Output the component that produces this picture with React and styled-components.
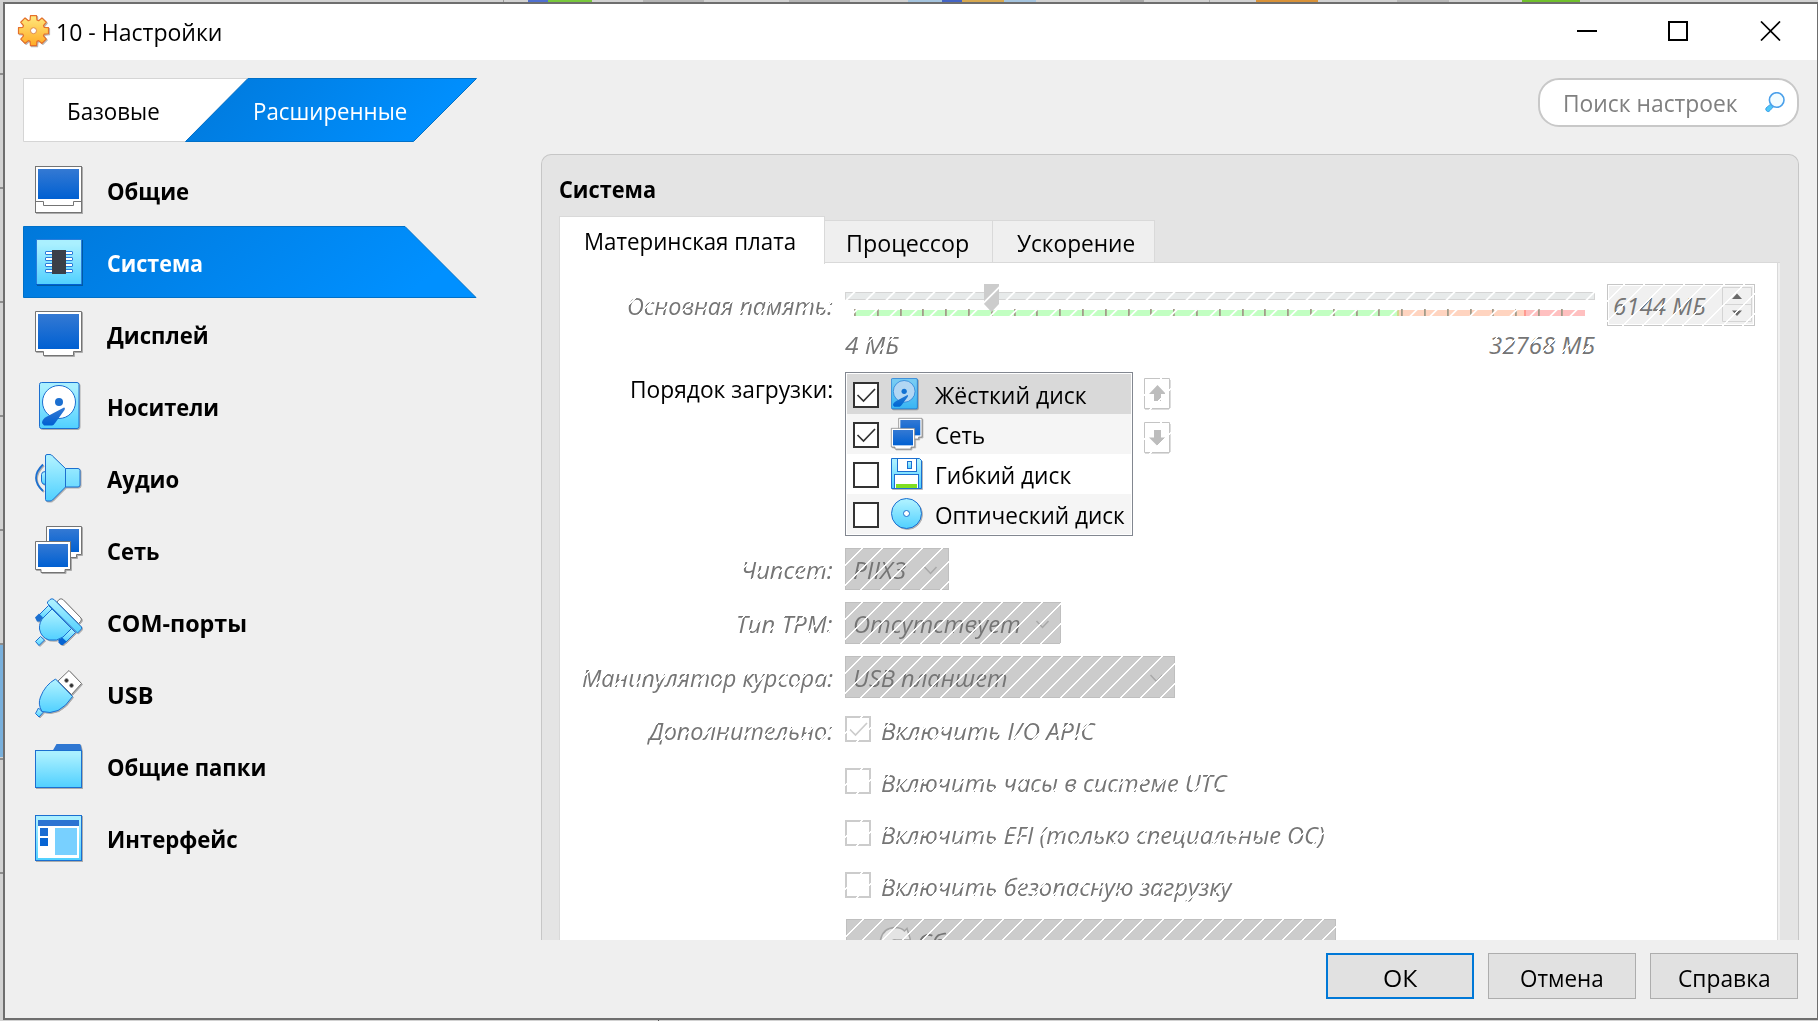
import React, { useLayoutEffect, useRef, useState } from "react";
import styled, { createGlobalStyle, css } from "styled-components";

const Global = createGlobalStyle`
  * { box-sizing: border-box; }
  html, body { margin: 0; width: 100%; height: 100%; overflow: hidden; }
  body { font-family: "Open Sans", "Noto Sans", sans-serif; font-size: 24px; color: #000; }
  button { font: inherit; color: inherit; padding: 0; margin: 0; }
`;

const hatch = css`
  position: relative;
  &::after {
    content: "";
    position: absolute;
    inset: ${(p) => (p.$edge ? -p.$edge : 0)}px;
    pointer-events: none;
    background: repeating-linear-gradient(
      135deg,
      transparent 0 11.5px,
      #fff 11.7px 13.1px,
      transparent 13.3px 14.142px
    );
  }
`;

/* ---------- text that keeps a fixed advance width ---------- */
const TextBox = styled.span`
  display: inline-block;
  flex: none;
  width: ${(p) => p.$w}px;
  line-height: 34px;
  height: 34px;
  white-space: nowrap;
  font-weight: ${(p) => (p.$bold ? 700 : 400)};
`;
const TextRun = styled.span`
  display: inline-block;
  transform-origin: 0 50%;
`;
function Fit({ w, bold, children }) {
  const ref = useRef(null);
  const [k, setK] = useState(1);
  useLayoutEffect(() => {
    setK(w / ref.current.offsetWidth);
  }, [w, children]);
  return (
    <TextBox $w={w} $bold={bold}>
      <TextRun ref={ref} style={{ transform: `scaleX(${k})` }}>{children}</TextRun>
    </TextBox>
  );
}

/* ---------- desktop and window ---------- */
const Desktop = styled.div`
  position: relative;
  width: 1818px;
  height: 1021px;
  background: #d2d2d2;
  overflow: hidden;
`;
const Behind = styled.svg`
  position: absolute;
  left: 0;
  top: 0;
`;
const Window = styled.div`
  position: absolute;
  left: 3px;
  top: 2px;
  width: 1815px;
  height: 1018px;
  border: 2px solid #6e6e6e;
  border-right-width: 1px;
  background: #efefef;
  display: flex;
  flex-direction: column;
`;
const TitleBar = styled.div`
  height: 56px;
  flex: none;
  background: #fff;
  display: flex;
  align-items: center;
  padding: 0 36px 0 12px;
`;
const TitleText = styled.div`
  margin-left: 7px;
  padding-top: 1px;
  height: 36px;
  flex: 1;
`;
const WinButtons = styled.div`
  display: flex;
  gap: 71px;
  margin-top: -2px;
  svg { display: block; }
`;
const Body = styled.div`
  height: 880px;
  flex: none;
  display: flex;
  justify-content: space-between;
  padding: 18px 18px 0 18px;
`;
const Side = styled.div`
  width: 455px;
`;
const ModeTabs = styled.div`
  position: relative;
  height: 64px;
  display: flex;
  align-items: center;
  svg { position: absolute; left: 0; top: 0; }
`;
const ModeLabel = styled.div`
  position: relative;
  height: 34px;
  margin-left: ${(p) => p.$left}px;
  color: ${(p) => p.$color};
  margin-top: 2px;
`;
const Nav = styled.div`
  margin-top: 12px;
`;
const NavItem = styled.div`
  position: relative;
  height: 72px;
  display: flex;
  align-items: center;
  padding-left: 12px;
  gap: 24px;
  color: ${(p) => (p.$active ? "#fff" : "#000")};
  > span { margin-top: 1px; position: relative; }
`;
const NavBack = styled.svg`
  position: absolute;
  left: 0;
  top: 0;
`;
const IconSvg = styled.svg`
  position: relative;
  display: block;
  flex: none;
  overflow: visible;
  filter: drop-shadow(1px 1px 0 rgba(0, 0, 0, 0.28));
`;
const Main = styled.div`
  width: 1258px;
  display: flex;
  flex-direction: column;
  align-items: flex-end;
`;
const Search = styled.div`
  width: 261px;
  height: 49px;
  flex: none;
  border: 2px solid #c8c8c8;
  border-radius: 21px;
  background: #fff;
  color: #808080;
  display: flex;
  align-items: center;
  justify-content: space-between;
  padding: 0 11px 0 23px;
`;
const Panel = styled.div`
  width: 1258px;
  height: 786px;
  margin-top: 27px;
  background: #e4e4e4;
  border: 1px solid #c6c6c6;
  border-bottom: 0;
  border-radius: 10px 10px 0 0;
  padding: 17px 18px 0 17px;
  display: flex;
  flex-direction: column;
`;
const PanelTitle = styled.div`
  height: 44px;
  flex: none;
`;
const Tabs = styled.div`
  display: flex;
  align-items: flex-end;
  height: 46px;
  flex: none;
`;
const Tab = styled.div`
  position: relative;
  width: ${(p) => p.$w}px;
  height: ${(p) => (p.$active ? 48 : 42)}px;
  margin-bottom: ${(p) => (p.$active ? -2 : 0)}px;
  z-index: ${(p) => (p.$active ? 1 : 0)};
  background: ${(p) => (p.$active ? "#fff" : "#efefef")};
  border: 1px solid #d9d9d9;
  border-bottom: 0;
  border-left-width: ${(p) => (p.$active ? 1 : 0)}px;
  padding: ${(p) => (p.$active ? 7 : 5)}px 0 0 ${(p) => p.$pad}px;
`;
const Pane = styled.div`
  flex: 1;
  min-height: 0;
  overflow: hidden;
  width: 1221px;
  background: #fff;
  border: 1px solid #d9d9d9;
  border-bottom: 0;
  border-right: 0;
  box-shadow: inset -2px 0 0 #f0f0f0, inset -3px 0 0 #d9d9d9;
  padding-top: 21px;
`;

/* ---------- form ---------- */
const Row = styled.div`
  display: flex;
  gap: 12px;
  margin-bottom: ${(p) => p.$mb || 0}px;
  height: ${(p) => p.$h}px;
`;
const Caption = styled.div`
  width: 273px;
  flex: none;
  display: flex;
  justify-content: flex-end;
  padding-top: ${(p) => p.$top ?? 5}px;
`;
const Muted = styled.div`
  ${hatch}
  height: 34px;
  font-style: italic;
  color: #757575;
`;
const Scale = styled.div`
  width: 750px;
  flex: none;
  height: 84px;
`;
const SliderArt = styled.svg`
  display: block;
`;
const Ends = styled.div`
  display: flex;
  justify-content: space-between;
  padding-top: 2px;
`;
const Spin = styled.div`
  ${hatch}
  width: 148px;
  height: 42px;
  border: 1px solid #c6c6c6;
  background: #f0f0f0;
  box-shadow: inset 0 0 0 1px #fff;
  font-style: italic;
  color: #757575;
  display: flex;
  justify-content: space-between;
  padding: 4px 2px 0 5px;
  svg { margin-top: -2px; }
`;
const BootList = styled.div`
  width: 288px;
  height: 164px;
  border: 1px solid #828790;
  padding: 1px;
  background: #fff;
`;
const BootItem = styled.div`
  height: 40px;
  background: ${(p) => p.$bg};
  display: grid;
  grid-template-columns: 26px 32px auto;
  column-gap: 12px;
  align-items: center;
  padding-left: 6px;
  > span { margin-top: 2px; }
`;
const Check = styled.span`
  width: 26px;
  height: 26px;
  flex: none;
  border: 2px solid ${(p) => (p.$off ? "#ccc" : "#333")};
  background: #fff;
  ${(p) => p.$off && hatch}
  svg { display: block; }
  &&& { margin-top: ${(p) => (p.$off ? 0 : 2)}px; }
`;
const Movers = styled.div`
  display: flex;
  flex-direction: column;
  gap: 12px;
  padding-top: 6px;
  margin-left: -1px;
`;
const Mover = styled.div`
  ${hatch}
  width: 27px;
  height: 32px;
  svg { display: block; }
`;
const Combo = styled.div`
  ${hatch}
  width: ${(p) => p.$w}px;
  height: 42px;
  background: #ccc;
  border: 1px solid #bfbfbf;
  color: #757575;
  font-style: italic;
  display: flex;
  justify-content: space-between;
  align-items: center;
  padding: 2px 10px 0 7px;
`;
const OptionLine = styled.div`
  display: flex;
  align-items: center;
  gap: 10px;
  > div { margin-top: 4px; }
`;
const ResetKeys = styled.div`
  ${hatch}
  width: 490px;
  height: 42px;
  margin: 8px 0 0 286px;
  background: #ccc;
  border: 1px solid #bfbfbf;
  color: #757575;
  font-style: italic;
  display: flex;
  padding-left: 32px;
  gap: 6px;
  svg { margin-top: 6px; flex: none; }
  > span { margin-top: 5px; }
`;
const Footer = styled.div`
  display: flex;
  justify-content: flex-end;
  gap: 14px;
  padding: 13px 19px 0 0;
`;
const PushButton = styled.button`
  width: 148px;
  height: 46px;
  background: #e1e1e1;
  border: ${(p) => (p.$primary ? "2px solid #0078d7" : "1px solid #adadad")};
  border-radius: 0;
  display: flex;
  align-items: center;
  justify-content: center;
  > span { margin-top: 3px; }
`;

/* ---------- drawings ---------- */
const B = "#1b6fd0";
const L = "url(#light)";
const D = "url(#deep)";
const G = "#747474";

const Defs = () => (
  <defs>
    <linearGradient id="light" x1="0" y1="0" x2="0" y2="1">
      <stop offset="0.1" stopColor="#aaf0ff" />
      <stop offset="1" stopColor="#50d0ff" />
    </linearGradient>
    <linearGradient id="deep" x1="0" y1="0" x2="0" y2="1">
      <stop offset="0" stopColor="#3479d3" />
      <stop offset="1" stopColor="#0060d2" />
    </linearGradient>
    <linearGradient id="gold" x1="0" y1="0" x2="0" y2="1">
      <stop offset="0" stopColor="#ffe97e" />
      <stop offset="1" stopColor="#ffab26" />
    </linearGradient>
    <linearGradient id="blueTab" x1="0" y1="0" x2="1" y2="0.2">
      <stop offset="0" stopColor="#0078da" />
      <stop offset="1" stopColor="#0090ff" />
    </linearGradient>
  </defs>
);

const Icon = ({ w = 48, h = 48, box = "0 0 48 48", children }) => (
  <IconSvg width={w} height={h} viewBox={box}>{children}</IconSvg>
);

const generalArt = (
  <>
    <rect x=".5" y=".5" width="46" height="46" fill="#fff" stroke={G} />
    <rect x="3" y="3" width="41" height="30" fill={D} />
    <path d="M.5 35.5H8.5V39.5H38.5V35.5H46.5" fill="none" stroke={G} />
  </>
);
const systemArt = (
  <>
    <rect x="1.5" y="1.5" width="45" height="45" fill={L} stroke="#2a7ddb" />
    <path d="M1 46.5H47" stroke="#0060d2" />
    {[13, 19, 25, 31].map((y) => (
      <rect key={y} x="10.5" y={y + 0.5} width="27" height="3" rx=".5" fill="#fff" stroke="#2a7ddb" />
    ))}
    <rect x="17" y="12" width="14" height="24" fill="#3b3f48" />
  </>
);
const displayArt = (
  <>
    <path d="M.5 1.5H46.5V41.5H38.5V45.5H8.5V41.5H.5Z" fill="#fff" stroke={G} />
    <rect x="3" y="4" width="41" height="35" fill={D} />
  </>
);
const diskArt = (
  <>
    <rect x="4.5" y=".5" width="39.5" height="46" rx="2" fill={L} stroke={B} />
    <circle cx="24" cy="20" r="16.5" fill="#fff" stroke={B} />
    <circle cx="24" cy="20" r="4" fill={B} />
    <path d="M29 25.5 12 34.5Q7 37 7 41L9 43.5H17Q19 43 20.5 40.5L29.5 28Q30.5 25.5 29 25.5Z" fill={D} />
  </>
);
const audioArt = (
  <>
    <path d="M8 10.5Q-6 24 8 37" fill="none" stroke={B} strokeWidth="1.8" />
    <path d="M10.5 17.5Q6.5 17.5 6.5 20.5V27Q6.5 30.5 10.5 30.5Z" fill={L} stroke={B} />
    <path d="M12 .5H15Q16.5 .5 17.5 2L30.5 14.5H43Q45 14.5 45 16.5V31Q45 33 43 33H30.5L17.5 46Q16.5 47 15 47H12Q10.5 47 10.5 45.5V2Q10.5 .5 12 .5Z" fill={L} stroke={B} />
    <path d="M30.5 14.5V33" stroke={B} />
  </>
);
const netArt = (
  <>
    <path d="M11.5 .5H46.5V28.5H41.5V31.5H17V28.5H11.5Z" fill="#fff" stroke={G} />
    <rect x="14" y="3" width="30" height="23" fill={D} />
    <path d="M.5 15.5H35.5V43.5H30V46.5H6V43.5H.5Z" fill="#fff" stroke={G} />
    <rect x="3" y="18" width="30" height="23" fill={D} />
  </>
);
const comArt = (
  <>
    <path d="M24 1.5Q26 0 28 1.5L46 20Q47 22 45.5 23.5L43.5 25.5 22 4Z" fill="#fff" stroke={G} />
    <path d="M13.5 7.5 17.5 11.5 7 21.5 3.5 17.5Z" fill={L} stroke={B} />
    <path d="M36 30 40.5 34.5 30.5 44.5 26 40Z" fill={L} stroke={B} />
    <path d="M0 19.5 4 15.5 8 19.5 5 23.5H2Z" fill={B} />
    <path d="M23.5 41 26 38.5 31.5 43.5 28 47H26L23.5 44.5Z" fill="#0764d3" />
    <path d="M5.5 38.5 9.5 42 4 47.5 .5 43.5Z" fill={L} stroke={B} />
    <path d="M17 11 36.5 30.5 28 39Q22 43.5 14 42Q6 39.5 4.5 31Q4 23.5 9 19Z" fill={L} stroke={B} />
    <path d="M15 1.5Q17 0 19 1.5L46.5 29Q47 31 45.5 32L42.5 35 12.5 5.5V4Z" fill={L} stroke={B} />
  </>
);
const usbArt = (
  <>
    <path d="M34 .5 46.5 13.5 36.5 24.5 23 11Z" fill="#fff" stroke={G} />
    <path d="M29.5 10.5h4M31.5 8.5v4M34.5 15.5h4M36.5 13.5v4" stroke="#333" strokeWidth="2.2" />
    <path d="M3.5 38 8 42.5 4 47 .5 43.5Z" fill={L} stroke={B} />
    <path d="M20.5 9 37.5 26.5Q31 36.5 23 40.5Q15 44 7 41.5Q2.5 34 5.5 27Q10 15 20.5 9Z" fill={L} stroke={B} />
  </>
);
const folderArt = (
  <>
    <path d="M17.5 9 21.5 2H44.5Q45.5 2 45.7 3L47 9Z" fill="#2f77d2" />
    <rect x=".5" y="8.5" width="46" height="37" fill={L} stroke={B} />
  </>
);
const interfaceArt = (
  <>
    <rect x=".5" y="1.5" width="46" height="45" fill={L} stroke={B} />
    <rect x="3" y="6" width="41" height="38" fill="#fff" />
    <rect x="3" y="6" width="41" height="6" fill="#2c73d2" />
    <rect x="5" y="14" width="8" height="8" fill="#1b6cd2" />
    <rect x="5" y="24" width="8" height="8" fill="#0764d3" />
    <rect x="20" y="14" width="22" height="27" fill="#78d0ff" />
  </>
);

const Gear = () => {
  const pts = [];
  for (let i = 0; i < 8; i++) {
    const a = (i * Math.PI) / 4 - Math.PI / 2;
    [[-0.31, 11.2], [-0.2, 15.3], [0.2, 15.3], [0.31, 11.2]].forEach(([d, r]) => {
      pts.push(`${(16.5 + r * Math.cos(a + d)).toFixed(2)},${(14.7 + r * Math.sin(a + d)).toFixed(2)}`);
    });
  }
  return (
    <Icon w={32} h={32} box="0 0 32 32">
      <polygon points={pts.join(" ")} fill="url(#gold)" stroke="#e5702a" strokeWidth="1.2" strokeLinejoin="round" />
      <circle cx="16.5" cy="14.7" r="3" fill="#fff" stroke="#e08a4a" strokeWidth="1" />
    </Icon>
  );
};

const Tick = ({ color }) => (
  <svg width="22" height="22"><path d="M2.5 11 8.5 17 20 5" fill="none" stroke={color} strokeWidth="1.7" /></svg>
);
const ChevronSvg = styled.svg`
  display: block;
`;
const Chevron = () => (
  <ChevronSvg width="15" height="9"><path d="M1.5 1 7.5 7.5 13.5 1" fill="none" stroke="#a8a8a8" strokeWidth="1.5" /></ChevronSvg>
);

const sections = [
  ["Общие", 82, generalArt],
  ["Система", 96, systemArt],
  ["Дисплей", 102, displayArt],
  ["Носители", 112, diskArt],
  ["Аудио", 72, audioArt],
  ["Сеть", 52, netArt],
  ["COM-порты", 140, comArt],
  ["USB", 46, usbArt],
  ["Общие папки", 159, folderArt],
  ["Интерфейс", 131, interfaceArt],
];

const boot = [
  ["Жёсткий диск", 152, true, "#d9d9d9",
    <Icon w={27} h={32} box="4 0 41 48">{diskArt}<rect x="4" y="0" width="41" height="47" rx="2" fill="#0078d7" opacity=".3" /></Icon>],
  ["Сеть", 50, true, "#f5f5f5", <Icon w={32} h={32}>{netArt}</Icon>],
  ["Гибкий диск", 136, false, "#fff",
    <Icon w={32} h={32} box="0 0 32 32">
      <path d="M.5 .5H28.5L30.5 2.5V30.5H.5Z" fill={L} stroke={B} />
      <rect x="6.5" y=".5" width="19" height="13" fill="#fff" stroke={B} />
      <rect x="16.5" y="3.5" width="4" height="7" fill={L} stroke={B} />
      <rect x="3.5" y="16.5" width="24" height="14" fill="#fff" stroke={B} />
      <rect x="5" y="26" width="21" height="4" fill="#80df20" />
    </Icon>],
  ["Оптический диск", 190, false, "#f5f5f5",
    <Icon w={32} h={32} box="0 0 32 32">
      <circle cx="15.5" cy="15.5" r="15" fill={L} stroke={B} />
      <circle cx="15.5" cy="15.5" r="3" fill="#fff" stroke={B} />
    </Icon>],
];

const options = [
  ["Включить I/O APIC", 214, true],
  ["Включить часы в системе UTC", 346, false],
  ["Включить EFI (только специальные ОС)", 444, false],
  ["Включить безопасную загрузку", 351, false],
];

const combos = [
  ["Чипсет:", 92, "PIIX3", 53, 104, 12],
  ["Тип TPM:", 97, "Отсутствует", 168, 216, 12],
  ["Манипулятор курсора:", 251, "USB планшет", 154, 330, 5],
];

const MutedText = ({ w, children }) => <Muted><Fit w={w}>{children}</Fit></Muted>;

const Slider = () => (
  <SliderArt width="750" height="42">
    <defs>
      <pattern id="lines" width="20" height="20" patternUnits="userSpaceOnUse">
        <path d="M-4 21.5 21.5 -4M14 23.5 23.5 14M-3 .5 .5 -3" stroke="#fff" strokeWidth="1.8" />
      </pattern>
    </defs>
    <rect x=".5" y="8.5" width="749" height="7" fill="#e7eaea" stroke="#d4d4d4" />
    <rect x="10" y="26" width="543" height="6" fill="#c2ffc2" />
    <rect x="553" y="26" width="127" height="6" fill="#ffd4c0" />
    <rect x="680" y="26" width="60" height="6" fill="#ffc0c0" />
    <rect x="552" y="26" width="2" height="6" fill="#d2d890" />
    <rect x="679" y="26" width="2" height="6" fill="#ff9a90" />
    {Array.from({ length: 32 }, (_, i) => (
      <rect key={i} x={Math.round(9 + i * 22.8)} y="25" width="1.8" height="7" fill="#a39c8a" />
    ))}
    <path d="M139 0H154V20L146.5 28 139 20Z" fill="#ccc" />
    <rect width="750" height="42" fill="url(#lines)" />
  </SliderArt>
);

export default function App() {
  return (
    <Desktop>
      <Global />
      <Behind width="1818" height="1021">
        <Defs />
        {[73, 187, 301, 415, 529, 758, 872].map((y) => <rect key={y} x="0" y={y} width="4" height="2" fill="#8e8e8e" />)}
        <rect x="0" y="643" width="4" height="2" fill="#8e8e8e" />
        <rect x="0" y="645" width="4" height="112" fill="#79b0dc" />
        <rect x="503" y="0" width="1" height="2" fill="#999" />
        <rect x="528" y="0" width="20" height="3" fill="#5070d0" />
        <rect x="548" y="0" width="44" height="3" fill="#78c83c" />
        <rect x="643" y="0" width="61" height="3" fill="#b5b5b5" />
        <rect x="789" y="0" width="61" height="3" fill="#b5b5b5" />
        <rect x="908" y="0" width="128" height="3" fill="#a5c4de" />
        <rect x="942" y="0" width="20" height="3" fill="#4464c4" />
        <rect x="962" y="0" width="42" height="3" fill="#d7a850" />
        <rect x="1120" y="0" width="24" height="3" fill="#a9a9a9" />
        <rect x="1209" y="0" width="1" height="3" fill="#aaa" />
        <rect x="1256" y="0" width="62" height="3" fill="#d99238" />
        <rect x="1397" y="0" width="52" height="3" fill="#b8b8b8" />
        <rect x="1522" y="0" width="58" height="3" fill="#70c02c" />
        <rect x="658" y="1019" width="1" height="2" fill="#555" />
      </Behind>
      <Window>
        <TitleBar>
          <Gear />
          <TitleText><Fit w={167}>10 - Настройки</Fit></TitleText>
          <WinButtons>
            <svg width="20" height="20"><rect y="9" width="20" height="2" /></svg>
            <svg width="20" height="20"><rect x="1" y="1" width="18" height="18" fill="none" stroke="#000" strokeWidth="2" /></svg>
            <svg width="22" height="20"><path d="M2 .5 21 19.500M21 .5 2 19.500" stroke="#000" strokeWidth="1.7" /></svg>
          </WinButtons>
        </TitleBar>
        <Body>
          <Side>
            <ModeTabs>
              <svg width="455" height="64">
                <path d="M.5 .5H225L162.5 63.5H.5Z" fill="#fff" stroke="#d5d5d5" />
                <path d="M225 .5H453.5L390.5 63.5H162.5Z" fill="url(#blueTab)" stroke="#0070c8" />
              </svg>
              <ModeLabel $left={44} $color="#000"><Fit w={93}>Базовые</Fit></ModeLabel>
              <ModeLabel $left={93} $color="#fff"><Fit w={154}>Расширенные</Fit></ModeLabel>
            </ModeTabs>
            <Nav>
              {sections.map(([name, w, art]) => (
                <NavItem key={name} $active={name === "Система"}>
                  {name === "Система" && (
                    <NavBack width="455" height="72">
                      <path d="M.5 .5H382L453 71.5H.5Z" fill="url(#blueTab)" stroke="#0070c8" />
                    </NavBack>
                  )}
                  <Icon>{art}</Icon>
                  <Fit w={w} bold>{name}</Fit>
                </NavItem>
              ))}
            </Nav>
          </Side>
          <Main>
            <Search>
              <Fit w={175}>Поиск настроек</Fit>
              <svg width="22" height="22" viewBox="0 0 22 22">
                <path d="M8 11 2 16Q1 18.5 3.5 19.5 5 20 6 18.5L10.5 13.5Z" fill="#4cc8f8" stroke="#3fa0e8" />
                <circle cx="12.7" cy="8" r="7.3" fill="#f2fcff" stroke="#4ba0ea" strokeWidth="1.6" />
              </svg>
            </Search>
            <Panel>
              <PanelTitle><Fit w={97} bold>Система</Fit></PanelTitle>
              <Tabs>
                <Tab $w={266} $pad={24} $active><Fit w={212}>Материнская плата</Fit></Tab>
                <Tab $w={168} $pad={21}><Fit w={123}>Процессор</Fit></Tab>
                <Tab $w={162} $pad={24}><Fit w={118}>Ускорение</Fit></Tab>
              </Tabs>
              <Pane>
                <Row $h={88}>
                  <Caption><MutedText w={206}>Основная память:</MutedText></Caption>
                  <Scale>
                    <Slider />
                    <Ends>
                      <MutedText w={54}>4 МБ</MutedText>
                      <MutedText w={106}>32768 МБ</MutedText>
                    </Ends>
                  </Scale>
                  <Spin $edge={1}>
                    <Fit w={93}>6144 МБ</Fit>
                    <svg width="30" height="36">
                      <path d="M.5 .5H29.5V34.5H.5ZM.5 17.5H29.5" fill="#f0f0f0" stroke="#d4d4d4" />
                      <path d="M10 12 15 6.5 20 12ZM10 23.5 15 29 20 23.5Z" fill="#6a6a6a" />
                    </svg>
                  </Spin>
                </Row>
                <Row $h={164} $mb={12}>
                  <Caption $top={0}><Fit w={203}>Порядок загрузки:</Fit></Caption>
                  <BootList>
                    {boot.map(([name, w, on, bg, icon]) => (
                      <BootItem key={name} $bg={bg}>
                        <Check>{on && <Tick color="#333" />}</Check>
                        {icon}
                        <Fit w={w}>{name}</Fit>
                      </BootItem>
                    ))}
                  </BootList>
                  <Movers>
                    {["M13.5 7 22 16H17V23H10V16H5Z", "M13.5 24 22 15.5H17V8H10V15.5H5Z"].map((d) => (
                      <Mover key={d}>
                        <svg width="27" height="32">
                          <path d="M.5 .5H25.5V30.5H.5Z" fill="none" stroke="#c4c4c4" />
                          <path d="M1 31.5H26.5V2" fill="none" stroke="#ddd" />
                          <path d={d} fill="#bdbdbd" />
                        </svg>
                      </Mover>
                    ))}
                  </Movers>
                </Row>
                {combos.map(([label, lw, value, vw, w, mb]) => (
                  <Row key={label} $h={42} $mb={mb}>
                    <Caption><MutedText w={lw}>{label}</MutedText></Caption>
                    <Combo $w={w} $edge={1}><Fit w={vw}>{value}</Fit><Chevron /></Combo>
                  </Row>
                ))}
                {options.map(([name, w, on], i) => (
                  <Row key={name} $h={52}>
                    <Caption $top={11}>{i === 0 && <MutedText w={184}>Дополнительно:</MutedText>}</Caption>
                    <OptionLine>
                      <Check $off $edge={2}>{on && <Tick color="#ccc" />}</Check>
                      <MutedText w={w}>{name}</MutedText>
                    </OptionLine>
                  </Row>
                ))}
                <ResetKeys $edge={1}>
                  <svg width="32" height="32">
                    <path d="M1 20Q1 2 16 1.500Q22 1.500 25.500 5L28 2.500 31.500 14H17Q12 13 11 20Z" fill="#e4e4e4" stroke="#a5a5a5" strokeWidth="1.500" />
                  </svg>
                  <Fit w={28}>Сб</Fit>
                </ResetKeys>
              </Pane>
            </Panel>
          </Main>
        </Body>
        <Footer>
          <PushButton $primary><Fit w={34}>ОК</Fit></PushButton>
          <PushButton><Fit w={84}>Отмена</Fit></PushButton>
          <PushButton><Fit w={93}>Справка</Fit></PushButton>
        </Footer>
      </Window>
    </Desktop>
  );
}
